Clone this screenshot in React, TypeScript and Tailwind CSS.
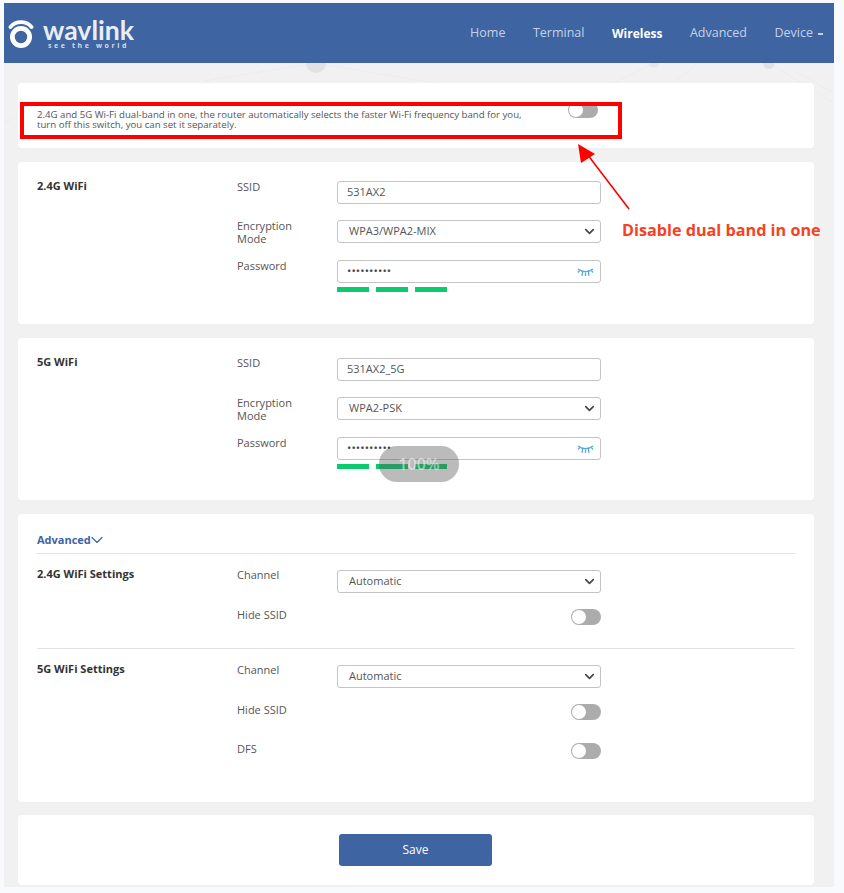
import { ChevronDown } from 'lucide-react';

const labelClass = 'w-[100px] shrink-0 text-[11px] leading-[12.5px] text-[#555]';
const fieldClass = 'w-[264px] h-[23px] border border-[#c4c4c4] rounded-[3px] bg-white flex items-center text-[11px] text-[#555]';
const groupTitle = 'w-[200px] shrink-0 text-[11px] font-bold text-[#333] leading-[12px] -mt-[2px]';

function Toggle() {
  return (
    <div className="w-[30px] h-[16px] rounded-full bg-[#acacac] p-px">
      <div className="w-[14px] h-[14px] rounded-full bg-white" />
    </div>
  );
}

function TextField({ value }: { value: string }) {
  return (
    <div className={`${fieldClass} pl-[9px]`}>
      <span>{value}</span>
    </div>
  );
}

function SelectField({ value }: { value: string }) {
  return (
    <div className={`${fieldClass} pl-[11px] pr-[3px] justify-between`}>
      <span>{value}</span>
      <ChevronDown className="w-[15px] h-[15px] text-[#444]" strokeWidth={2.6} />
    </div>
  );
}

function PasswordField() {
  return (
    <div>
      <div className={`${fieldClass} pl-[9px] pr-[6px] justify-between`}>
        <span className="text-[11.5px] tracking-[0.1px] text-[#444] -mt-px">••••••••••</span>
        <svg width="17" height="10" viewBox="0 0 17 10" fill="none" stroke="#58a6dd" strokeWidth="1.3">
          <path d="M1 2c4 3.4 11 3.4 15 0" />
          <path d="M2.6 3.6L1 5.5M5.6 5L5 8.8M8.5 5.4v3.6M11.4 5L12 8.8M14.4 3.6L16 5.5" />
        </svg>
      </div>
      <div className="flex gap-[7px] mt-[4px]">
        <div className="w-[32px] h-[5px] bg-[#0ccb6e]" />
        <div className="w-[32px] h-[5px] bg-[#0ccb6e]" />
        <div className="w-[32px] h-[5px] bg-[#0ccb6e]" />
      </div>
    </div>
  );
}

function Label({ children }: { children: React.ReactNode }) {
  return <div className={labelClass}>{children}</div>;
}

function WifiCard({ title, ssid, mode, nudge }: { title: string; ssid: string; mode: string; nudge: string }) {
  return (
    <div className="bg-white rounded-[4px] flex pl-[19px] pt-[19px] h-[162px]">
      <div className="w-[200px] shrink-0 text-[11px] font-bold text-[#333] leading-[12px] -mt-px">{title}</div>
      <div className="flex flex-col">
        <div className="flex">
          <Label>SSID</Label>
          <div className={nudge}><TextField value={ssid} /></div>
        </div>
        <div className="flex h-[23px] mt-[16px]">
          <div className="w-[100px] shrink-0">
            <div className="w-[70px] text-[11px] leading-[13px] text-[#555] -mt-px">Encryption Mode</div>
          </div>
          <div className="pt-px -mt-px"><SelectField value={mode} /></div>
        </div>
        <div className="flex mt-[17px]">
          <Label>Password</Label>
          <PasswordField />
        </div>
      </div>
    </div>
  );
}

export default function App() {
  return (
    <div className="relative w-[844px] h-[893px] bg-[#f8fafd] overflow-hidden" style={{ fontFamily: '"Open Sans", "Noto Sans", sans-serif' }}>
      <div className="w-[830px] ml-[4px] mt-[3px] h-[884px] bg-[#f1f1f1] relative">
        {/* Header */}
        <div className="h-[60px] bg-[#3e64a2] flex items-center justify-between pl-[4px] pr-[11px]">
          <div className="flex items-center gap-[9px]">
            <svg width="26" height="31" viewBox="0 0 26 31" fill="none" stroke="white">
              <path d="M2.5 9C8 2.6 18 2.6 23.5 9" strokeWidth="3.8" strokeLinecap="round" />
              <circle cx="13" cy="19" r="8.6" strokeWidth="4.8" />
            </svg>
            <div className="flex flex-col items-start mt-[2px]">
              <span className="text-[26.6px] leading-[24px] font-bold text-[#e9eef6]" style={{ fontFamily: '"Lato", sans-serif' }}>wavlink</span>
              <span className="text-[7px] leading-[8px] font-bold text-[#d5deeb] tracking-[2.6px] pl-[5px]">see the world</span>
            </div>
          </div>
          <nav className="flex items-center gap-[27.5px] text-[12.5px] text-[#c4d2e8] mt-[1px]">
            <span>Home</span>
            <span>Terminal</span>
            <span className="text-[12px] font-bold text-white">Wireless</span>
            <span>Advanced</span>
            <span className="flex items-center gap-[5px]">
              Device
              <span className="w-[5px] h-[2px] bg-[#c4d2e8]" />
            </span>
          </nav>
        </div>

        {/* faint network backdrop */}
        <svg className="absolute left-0 top-[60px]" width="830" height="60" fill="none" stroke="#ececec">
          <path d="M312 0L200 18M312 0L430 20M650 0L610 20M695 0L655 30M765 0L830 40M790 8L830 30M0 60L40 40" />
          <circle cx="312" cy="0" r="10" fill="#e2e2e2" stroke="none" />
          <circle cx="650" cy="0" r="5" fill="#e6e6e6" stroke="none" />
          <circle cx="765" cy="0" r="6" fill="#e2e2e2" stroke="none" />
        </svg>

        {/* Cards */}
        <div className="relative flex flex-col w-[796px] ml-[14px] pt-[20px]">
          <div className="h-[65px] bg-white rounded-[4px] flex pl-[19px] pt-[27px]">
            <p className="w-[531px] text-[9.65px] leading-[10px] text-[#555] whitespace-nowrap">
              2.4G and 5G Wi-Fi dual-band in one, the router automatically selects the faster Wi-Fi frequency band for you,
              <br />
              turn off this switch, you can set it separately.
            </p>
            <div className="-mt-[8px]"><Toggle /></div>
          </div>

          <div className="mt-[14px]">
            <WifiCard title="2.4G WiFi" ssid="531AX2" mode="WPA3/WPA2-MIX" nudge="mt-0" />
          </div>
          <div className="mt-[14px]">
            <WifiCard title="5G WiFi" ssid="531AX2_5G" mode="WPA2-PSK" nudge="mt-px" />
          </div>

          {/* Advanced */}
          <div className="mt-[14px] h-[288px] bg-white rounded-[4px] px-[19px] pt-[19px]">
            <div className="h-[21px] border-b border-[#e2e2e2] flex items-start text-[11px] font-bold text-[#3e64a2] leading-[14px]">
              Advanced
              <ChevronDown className="w-[20px] h-[20px] -mx-[4px] -mt-[3px] text-[#3e64a2]" strokeWidth={1.4} />
            </div>
            <div className="flex h-[95px] pt-[16px] border-b border-[#e2e2e2]">
              <div className={groupTitle}>2.4G WiFi Settings</div>
              <div className="flex flex-col gap-[16px]">
                <div className="flex"><div className="-mt-px"><Label>Channel</Label></div><SelectField value="Automatic" /></div>
                <div className="flex justify-between w-[364px]"><Label>Hide SSID</Label><Toggle /></div>
              </div>
            </div>
            <div className="flex pt-[16px]">
              <div className={groupTitle}>5G WiFi Settings</div>
              <div className="flex flex-col">
                <div className="flex"><div className="-mt-px"><Label>Channel</Label></div><SelectField value="Automatic" /></div>
                <div className="flex justify-between w-[364px] mt-[16px]"><Label>Hide SSID</Label><Toggle /></div>
                <div className="flex justify-between w-[364px] mt-[23px]"><Label>DFS</Label><Toggle /></div>
              </div>
            </div>
          </div>

          {/* Save */}
          <div className="mt-[13px] h-[70px] bg-white rounded-[4px] flex items-start pl-[321px] pt-[19px]">
            <button className="w-[153px] h-[32px] bg-[#3e64a2] rounded-[3px] text-[12px] text-white">Save</button>
          </div>
        </div>
      </div>

      {/* Annotation overlays */}
      <div className="absolute left-[20px] top-[102px] w-[602px] h-[37px] border-[4px] border-[#fe0000]" />
      <svg className="absolute left-[570px] top-[140px]" width="64" height="72" fill="none">
        <path d="M59 69L14 10" stroke="#fe0000" strokeWidth="1.6" />
        <path d="M8 4L25 14L11 23Z" fill="#fe0000" />
      </svg>
      <div className="absolute left-[622px] top-[220px] text-[16.2px] leading-[20px] font-bold text-[#f5421f] whitespace-nowrap">Disable dual band in one</div>
      <div className="absolute left-[379px] top-[446px] w-[80px] h-[36px] rounded-[18px] bg-[#555]/40 flex items-center justify-center text-[16px] font-semibold text-white/50">100%</div>
    </div>
  );
}
